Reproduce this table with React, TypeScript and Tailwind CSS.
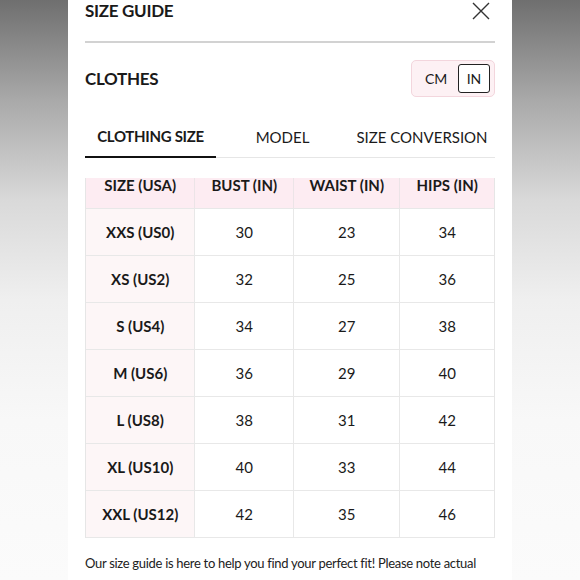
import React from "react";

const rows = [
  ["XXS (US0)", "30", "23", "34"],
  ["XS (US2)", "32", "25", "36"],
  ["S (US4)", "34", "27", "38"],
  ["M (US6)", "36", "29", "40"],
  ["L (US8)", "38", "31", "42"],
  ["XL (US10)", "40", "33", "44"],
  ["XXL (US12)", "42", "35", "46"],
];

const widths = ["w-[109px]", "w-[99px]", "w-[107px]", "w-[95px]"];

export default function App() {
  return (
    <div
      className="w-[580px] h-[580px] overflow-hidden flex justify-center bg-[linear-gradient(180deg,#6f6f6f_0px,#a9a9a9_100px,#d9d9d9_200px,#efefef_300px,#f8f8f8_420px,#fbfbfb_580px)]"
      style={{ fontFamily: "Lato, 'Open Sans', sans-serif" }}
    >
      <div className="w-[444px] h-[580px] overflow-hidden bg-white px-[17px] text-[#1a1a1a]">
        {/* header */}
        <div className="h-[41px] flex items-start justify-between">
          <div className="text-[17px] leading-[22px] font-bold tracking-[-0.3px]">SIZE GUIDE</div>
          <svg width="18" height="18" viewBox="0 0 18 18" className="mr-[5px] mt-[2px]">
            <path d="M1 1L17 17M17 1L1 17" stroke="#333" strokeWidth="1.4" fill="none" />
          </svg>
        </div>
        <div className="h-[2px] bg-[#d2d2d2]" />
        {/* clothes row */}
        <div className="h-[71px] flex items-center justify-between">
          <div className="text-[17px] font-bold tracking-[-0.3px]">CLOTHES</div>
          <div className="w-[84px] h-[37px] rounded-[5px] border border-[#f3d6dd] bg-[#fdf1f4] flex items-center pl-[13px] pr-[4px] justify-between">
            <span className="text-[14px]">CM</span>
            <span className="w-[32px] h-[29px] rounded-[3px] border-[1.5px] border-[#222] bg-white flex items-center justify-center text-[14px]">
              IN
            </span>
          </div>
        </div>
        {/* tabs */}
        <div className="h-[44px] flex border-b border-[#e6e6e6]">
          <div className="w-[131px] flex items-center justify-center pt-[3px] border-b-[2px] border-[#111] mb-[-1px] text-[15px] font-bold tracking-[-0.3px]">
            CLOTHING SIZE
          </div>
          <div className="w-[133px] flex items-center justify-center pt-[3px] text-[15px]">MODEL</div>
          <div className="w-[146px] flex items-center justify-center pt-[3px] text-[15px]">SIZE CONVERSION</div>
        </div>
        {/* table */}
        <div className="mt-[20px] border-l-[1.5px] border-r-[1.5px] border-[#e6e6e6]">
          <div className="flex h-[30px] bg-[#fdecf2]">
            {["SIZE (USA)", "BUST (IN)", "WAIST (IN)", "HIPS (IN)"].map((h, i) => (
              <div
                key={h}
                className={`${widths[i]} flex items-start justify-center text-[15px] leading-[15px] font-bold ${i > 0 ? "border-l-[1.5px] border-[#ece4e7]" : ""}`}
              >
                {h}
              </div>
            ))}
          </div>
          {rows.map((r) => (
            <div key={r[0]} className="flex h-[47px] border-t-[1.5px] border-[#e8e8e8]">
              {r.map((c, i) => (
                <div
                  key={i}
                  className={`${widths[i]} flex items-center justify-center text-[15px] ${i === 0 ? "font-bold bg-[#fdf6f7]" : "border-l-[1.5px] border-[#e8e8e8]"}`}
                >
                  {c}
                </div>
              ))}
            </div>
          ))}
          <div className="border-t-[1.5px] border-[#e8e8e8]" />
        </div>
        {/* note */}
        <p className="mt-[13px] text-[13px] leading-[24px] tracking-[-0.3px] text-[#222]">
          Our size guide is here to help you find your perfect fit! Please note actual
          measurements of garments may vary slightly due to the various types of
          fabrics used in our collections.
        </p>
      </div>
    </div>
  );
}
